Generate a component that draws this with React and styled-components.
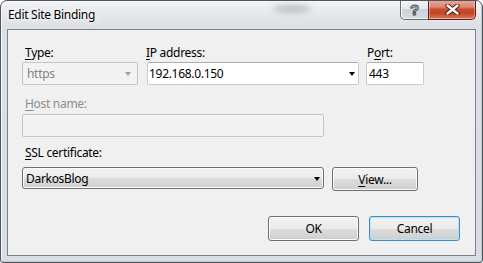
import React from "react";
import styled, { createGlobalStyle } from "styled-components";

const Global = createGlobalStyle`
  html, body { margin: 0; padding: 0; background: #ffffff; }
  body { font-family: "Noto Sans", "DejaVu Sans", sans-serif; font-size: 12px; letter-spacing: -0.3px; color: #000; }
  #root { width: 483px; height: 263px; }
`;

const Window = styled.div`
  box-sizing: border-box;
  position: relative;
  width: 483px;
  height: 263px;
  border: 1px solid #4f555c;
  border-radius: 7px 7px 3px 3px;
  background: linear-gradient(180deg, #f3f4f6 0px, #e6e8eb 12px, #dcdfe3 28px, #dadde1 100%);
  box-shadow: inset 1px 1px 0 #f7f8f9, inset -1px -1px 0 #c3c7cc;
  display: flex;
  flex-direction: column;
  overflow: hidden;
`;

const GlassSmudge = styled.div`
  position: absolute;
  left: 272px;
  top: 4px;
  width: 38px;
  height: 7px;
  border-radius: 50%;
  background: rgba(90, 95, 100, 0.35);
  filter: blur(3px);
  pointer-events: none;
`;

const TitleBar = styled.div`
  flex: none;
  height: 28px;
  display: flex;
  align-items: flex-start;
  padding-left: 7px;
  position: relative;
`;

const Title = styled.div`
  padding-top: 6px;
  line-height: 16px;
  font-size: 12px;
  color: #000;
  text-shadow: 0 0 6px #fff, 0 0 3px #fff;
`;

const CaptionButtons = styled.div`
  margin-left: auto;
  margin-right: 6px;
  margin-top: -1px;
  display: flex;
  height: 20px;
`;

const HelpButton = styled.div`
  box-sizing: border-box;
  width: 28px;
  height: 20px;
  border: 1px solid #676c73;
  border-top: none;
  border-right: none;
  border-radius: 0 0 0 5px;
  background: linear-gradient(180deg, #f5f6f7 0%, #e6e8eb 45%, #cfd3d8 50%, #d7dbdf 100%);
  box-shadow: inset 1px 0 0 #fdfdfd, inset 0 -1px 0 #f2f3f4;
  display: flex;
  align-items: center;
  justify-content: center;
`;

const HelpGlyph = styled.span`
  font-family: "Liberation Sans", "DejaVu Sans", sans-serif;
  font-weight: bold;
  font-size: 15px;
  line-height: 15px;
  letter-spacing: 0;
  color: #eef0f2;
  -webkit-text-stroke: 1px #45494e;
  margin-top: -1px;
`;

const CloseButton = styled.div`
  box-sizing: border-box;
  width: 48px;
  height: 20px;
  border: 1px solid #5a2219;
  border-top: none;
  border-radius: 0 0 5px 0;
  background: linear-gradient(180deg, #eaa999 0%, #dc8a74 35%, #c84a2d 50%, #c44528 70%, #de7658 100%);
  box-shadow: inset 1px 0 0 rgba(255,255,255,0.35), inset -1px 0 0 rgba(255,255,255,0.3), inset 0 -1px 0 rgba(255,210,190,0.6);
  display: flex;
  align-items: center;
  justify-content: center;
`;

const Client = styled.div`
  flex: 1;
  margin: 0 6px 6px 6px;
  border: 1px solid #7c8187;
  background: #f0f0f0;
  padding: 15px 15px 0 14px;
  display: flex;
  flex-direction: column;
`;

const Row = styled.div`
  display: flex;
  align-items: flex-start;
  margin-top: ${(p) => p.$top || 0}px;
  justify-content: ${(p) => (p.$end ? "flex-end" : "flex-start")};
`;

const Field = styled.div`
  display: flex;
  flex-direction: column;
  width: ${(p) => p.$width}px;
  margin-left: ${(p) => p.$ml || 0}px;
`;

const Label = styled.div`
  line-height: 15px;
  height: 15px;
  margin-left: ${(p) => p.$indent || 0}px;
  margin-bottom: ${(p) => p.$gap || 2}px;
  color: ${(p) => (p.$disabled ? "#8d8d8d" : "#000")};
  white-space: nowrap;
`;

const Key = styled.span`
  text-decoration: underline;
  text-underline-offset: 2px;
`;

const Box = styled.div`
  box-sizing: border-box;
  height: ${(p) => p.$h || 23}px;
  display: flex;
  align-items: center;
  border: 1px solid #c9cbcf;
  border-top-color: #abadb3;
  border-radius: 2px;
  background: #fff;
  padding-left: ${(p) => p.$pl || 2}px;
  padding-right: ${(p) => p.$pr || 0}px;
  white-space: nowrap;
`;

const DisabledBox = styled(Box)`
  background: #f3f3f3;
  border-color: #c6c6c6;
  color: #838383;
`;

const DropButton = styled(Box)`
  border: 1px solid #707070;
  border-radius: 3px;
  background: linear-gradient(180deg, #f2f2f2 0%, #ebebeb 50%, #dddddd 50%, #cfcfcf 100%);
  box-shadow: inset 0 0 0 1px #fbfbfb;
`;

const BoxText = styled.span`
  flex: 1;
  line-height: 15px;
`;

const Arrow = styled.span`
  width: 0;
  height: 0;
  border-left: 3.5px solid transparent;
  border-right: 3.5px solid transparent;
  border-top: 4px solid ${(p) => p.$color || "#000"};
  margin-top: 1px;
`;

const Button = styled.div`
  box-sizing: border-box;
  width: ${(p) => p.$width}px;
  height: ${(p) => p.$h || 25}px;
  margin-left: ${(p) => p.$ml || 0}px;
  margin-top: ${(p) => p.$mt || 0}px;
  border: 1px solid ${(p) => (p.$default ? "#3c8dcb" : "#707070")};
  border-radius: 3px;
  background: linear-gradient(180deg, #f2f2f2 0%, #ebebeb 50%, #dddddd 50%, #cfcfcf 100%);
  box-shadow: inset 0 0 0 1px ${(p) => (p.$default ? "#b9e1f7" : "#fbfbfb")};
  display: flex;
  align-items: center;
  justify-content: center;
  line-height: 15px;
`;

function CloseGlyph() {
  return (
    <svg width="15" height="11" viewBox="0 0 15 11">
      <path d="M2.5 1.5 L12.5 9.5 M12.5 1.5 L2.5 9.5" stroke="#4a1d14" strokeWidth="4.4" strokeLinecap="round" />
      <path d="M2.5 1.5 L12.5 9.5 M12.5 1.5 L2.5 9.5" stroke="#ffffff" strokeWidth="2.4" strokeLinecap="round" />
    </svg>
  );
}

export default function App() {
  return (
    <>
      <Global />
      <Window>
        <GlassSmudge />
        <TitleBar>
          <Title>Edit Site Binding</Title>
          <CaptionButtons>
            <HelpButton>
              <HelpGlyph>?</HelpGlyph>
            </HelpButton>
            <CloseButton>
              <CloseGlyph />
            </CloseButton>
          </CaptionButtons>
        </TitleBar>
        <Client>
          <Row>
            <Field $width={116}>
              <Label $indent={3}>
                <Key>T</Key>ype:
              </Label>
              <DisabledBox $pl={4} $pr={6}>
                <BoxText>https</BoxText>
                <Arrow $color="#a2a2a2" />
              </DisabledBox>
            </Field>
            <Field $width={212} $ml={9}>
              <Label $indent={-1}>
                <Key>I</Key>P address:
              </Label>
              <Box $pl={1} $pr={3}>
                <BoxText>192.168.0.150</BoxText>
                <Arrow />
              </Box>
            </Field>
            <Field $width={58} $ml={7}>
              <Label $indent={1}>
                P<Key>o</Key>rt:
              </Label>
              <Box $pl={2}>
                <BoxText>443</BoxText>
              </Box>
            </Field>
          </Row>
          <Row $top={11}>
            <Field $width={302}>
              <Label $indent={3} $gap={3} $disabled>
                <Key>H</Key>ost name:
              </Label>
              <DisabledBox />
            </Field>
          </Row>
          <Row $top={8}>
            <Field $width={302}>
              <Label $indent={3} $gap={7}>
                <Key>S</Key>SL certificate:
              </Label>
              <DropButton $h={22} $pl={3} $pr={3}>
                <BoxText>DarkosBlog</BoxText>
                <Arrow />
              </DropButton>
            </Field>
            <Button $width={86} $h={24} $ml={8} $mt={22}>
              <span>
                <Key>V</Key>iew...
              </span>
            </Button>
          </Row>
          <Row $top={25} $end>
            <Button $width={91}>OK</Button>
            <Button $width={91} $ml={10} $default>
              Cancel
            </Button>
          </Row>
        </Client>
      </Window>
    </>
  );
}
